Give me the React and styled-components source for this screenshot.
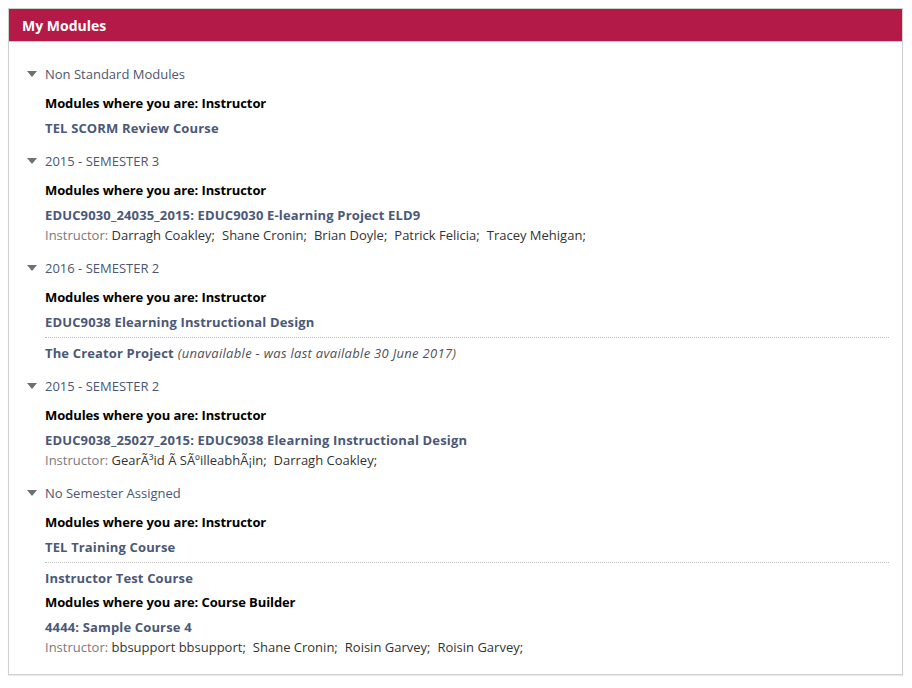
import React from "react";
import styled, { createGlobalStyle } from "styled-components";

const groups = [
  {
    title: "Non Standard Modules",
    roles: [
      {
        role: "Instructor",
        courses: [{ name: "TEL SCORM Review Course" }],
      },
    ],
  },
  {
    title: "2015 - SEMESTER 3",
    roles: [
      {
        role: "Instructor",
        courses: [
          {
            name: "EDUC9030_24035_2015: EDUC9030 E-learning Project ELD9",
            instructors: [
              "Darragh Coakley",
              "Shane Cronin",
              "Brian Doyle",
              "Patrick Felicia",
              "Tracey Mehigan",
            ],
          },
        ],
      },
    ],
  },
  {
    title: "2016 - SEMESTER 2",
    roles: [
      {
        role: "Instructor",
        courses: [
          { name: "EDUC9038 Elearning Instructional Design" },
          {
            name: "The Creator Project",
            note: "(unavailable - was last available 30 June 2017)",
          },
        ],
      },
    ],
  },
  {
    title: "2015 - SEMESTER 2",
    roles: [
      {
        role: "Instructor",
        courses: [
          {
            name: "EDUC9038_25027_2015: EDUC9038 Elearning Instructional Design",
            instructors: ["GearÃ³id Ã SÃºilleabhÃ¡in", "Darragh Coakley"],
          },
        ],
      },
    ],
  },
  {
    title: "No Semester Assigned",
    roles: [
      {
        role: "Instructor",
        courses: [
          { name: "TEL Training Course" },
          { name: "Instructor Test Course" },
        ],
      },
      {
        role: "Course Builder",
        courses: [
          {
            name: "4444: Sample Course 4",
            instructors: [
              "bbsupport bbsupport",
              "Shane Cronin",
              "Roisin Garvey",
              "Roisin Garvey",
            ],
          },
        ],
      },
    ],
  },
];

const Global = createGlobalStyle`
  body {
    margin: 0;
    background: #fff;
    font-family: "Open Sans", "Liberation Sans", sans-serif;
    font-size: 13px;
  }
`;

const Panel = styled.div`
  margin: 8px 9px 8px 8px;
  border: 1px solid #cfcfcf;
  box-shadow: 0 1px 1px rgba(0, 0, 0, 0.08);
  background: #fff;
`;

const Header = styled.div`
  height: 32px;
  line-height: 33px;
  padding-left: 13px;
  background: #b41a47;
  border-bottom: 1px solid #c8c8c8;
  color: #fff;
  font-weight: 700;
  font-size: 14px;
`;

const Body = styled.div`
  padding: 22px 13px 17px 17px;
`;

const Group = styled.div`
  margin-bottom: 13px;
  &:last-child {
    margin-bottom: 0;
  }
`;

const GroupTitle = styled.div`
  display: flex;
  align-items: center;
  height: 20px;
  margin-bottom: 9px;
  color: #4d5670;
`;

const Arrow = styled.span`
  width: 0;
  height: 0;
  border-left: 5px solid transparent;
  border-right: 5px solid transparent;
  border-top: 6px solid #707070;
  margin: 0 8px 0 1px;
`;

const Inner = styled.div`
  padding-left: 19px;
`;

const RoleBlock = styled.div`
  & + & {
    margin-top: 4px;
  }
`;

const RoleHeading = styled.div`
  height: 20px;
  line-height: 20px;
  margin-bottom: 5px;
  color: #000;
  font-weight: 700;
  letter-spacing: -0.1px;
`;

const CourseItem = styled.div`
  & + & {
    margin-top: 5px;
    padding-top: 5px;
    border-top: 1px dotted #bdbdbd;
  }
`;

const CourseLink = styled.div`
  height: 20px;
  line-height: 20px;
  color: #4b5877;
  font-weight: 700;
  white-space: nowrap;
  letter-spacing: 0.15px;
`;

const Note = styled.span`
  font-weight: 400;
  font-style: italic;
  color: #4f5158;
  margin-left: 4px;
  letter-spacing: 0.3px;
`;

const InstructorRow = styled.div`
  height: 20px;
  line-height: 20px;
  color: #333;
  white-space: nowrap;
`;

const Label = styled.span`
  color: #7a7a7a;
`;

const Name = styled.span`
  margin-right: 7px;
`;

export default function App() {
  return (
    <>
      <Global />
      <Panel>
        <Header>My Modules</Header>
        <Body>
          {groups.map((g) => (
            <Group key={g.title}>
              <GroupTitle>
                <Arrow />
                {g.title}
              </GroupTitle>
              <Inner>
                {g.roles.map((r) => (
                  <RoleBlock key={r.role}>
                    <RoleHeading>Modules where you are: {r.role}</RoleHeading>
                    {r.courses.map((c) => (
                      <CourseItem key={c.name}>
                        <CourseLink>
                          {c.name}
                          {c.note && <Note>{c.note}</Note>}
                        </CourseLink>
                        {c.instructors && (
                          <InstructorRow>
                            <Label>Instructor: </Label>
                            {c.instructors.map((n, i) => (
                              <Name key={i}>{n};</Name>
                            ))}
                          </InstructorRow>
                        )}
                      </CourseItem>
                    ))}
                  </RoleBlock>
                ))}
              </Inner>
            </Group>
          ))}
        </Body>
      </Panel>
    </>
  );
}
